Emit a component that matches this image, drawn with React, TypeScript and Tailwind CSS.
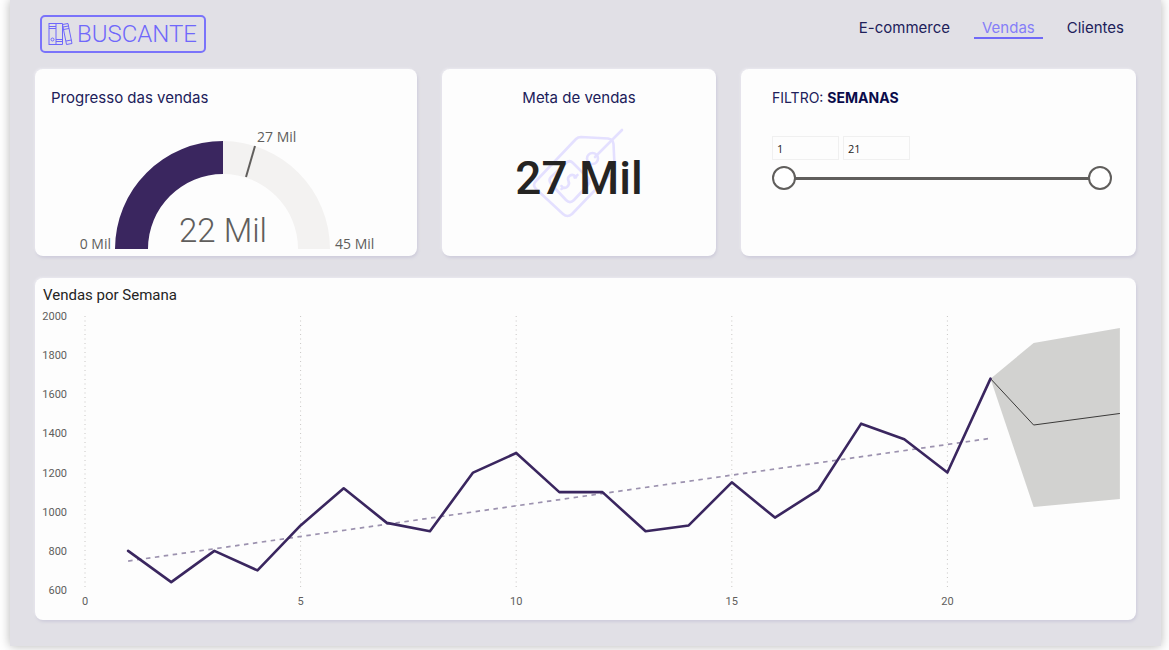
import React, { useState } from 'react';

const NAV_ITEMS = ['E-commerce', 'Vendas', 'Clientes'];

const SALES = [
  800, 640, 800, 700, 930, 1120, 943, 900, 1200, 1300, 1100,
  1100, 900, 930, 1150, 970, 1110, 1450, 1370, 1200, 1680,
];

const FORECAST = [
  { week: 21, value: 1680, low: 1680, high: 1680 },
  { week: 22, value: 1443, low: 1024, high: 1862 },
  { week: 24, value: 1502, low: 1065, high: 1939 },
];

const TREND = { from: { week: 1, value: 748 }, to: { week: 21, value: 1375 } };

const Y_TICKS = [2000, 1800, 1600, 1400, 1200, 1000, 800, 600];
const X_TICKS = [0, 5, 10, 15, 20];

const xAt = (week: number) => 50 + week * 43.12;
const yAt = (value: number) => 283 - (value - 600) * 0.1957;
const toPoints = (list: { week: number; value: number }[]) =>
  list.map((p) => `${xAt(p.week)},${yAt(p.value)}`).join(' ');

const Card: React.FC<{ className?: string; children: React.ReactNode }> = ({ className = '', children }) => (
  <section className={`rounded-lg bg-[#fdfdfd] shadow-[1px_2px_3px_#cfcddb,-1px_-1px_2px_#ebeaf0] ${className}`}>
    {children}
  </section>
);

const Logo = () => (
  <a
    href="#"
    className="flex h-[38px] w-[166px] items-center gap-1 rounded-[5px] border-2 border-[#7a73fa] pl-1.5 text-[#6f67fb]"
  >
    <svg
      width="25"
      height="24"
      viewBox="0 0 25 24"
      fill="none"
      stroke="currentColor"
      strokeWidth="1"
      className="shrink-0"
      aria-hidden="true"
    >
      <rect x="1" y="1.5" width="7" height="21" />
      <path d="M1 4.5h7M1 6.5h7M8 1.5h6.500v21H8M8 17.500h6.500M8 19.500h6.500" />
      <circle cx="4.500" cy="17.500" r="1.500" />
      <path d="M14.500 2.500l5.500-1 4 20-5.500 1zM15 5l5.500-1M15.500 7.500l5.500-1M18 19l5.500-1" />
    </svg>
    <span className="font-[Roboto,sans-serif] text-[24px] leading-8 font-light">BUSCANTE</span>
  </a>
);

const GaugeCard = () => (
  <Card>
    <h2 className="pt-[18px] pl-4 text-[15px] leading-[22px]">Progresso das vendas</h2>
    <svg viewBox="0 0 382 147" className="block w-full" role="img" aria-label="22 Mil de 45 Mil">
      <path d="M80 140A108 108 0 0 1 188 32V65A75 75 0 0 0 113 140Z" fill="#3a265f" />
      <path d="M188 32A108 108 0 0 1 295 140H263A75 75 0 0 0 188 65Z" fill="#f3f2f1" />
      <line x1="220" y1="37" x2="211" y2="68" stroke="#605e5c" strokeWidth="2" />
      <g className="font-['Open_Sans',sans-serif] text-[14px]" fill="#605e5c">
        <text x="222" y="33">27 Mil</text>
        <text x="76" y="140" textAnchor="end">0 Mil</text>
        <text x="300" y="140">45 Mil</text>
      </g>
      <text
        x="188"
        y="133"
        textAnchor="middle"
        fill="#605e5c"
        className="font-[Roboto,sans-serif] text-[33px] font-light"
      >
        22 Mil
      </text>
    </svg>
  </Card>
);

const GoalCard = () => (
  <Card className="text-center">
    <h2 className="pt-[18px] text-[15px] leading-[22px]">Meta de vendas</h2>
    <div className="mt-[18px] grid h-[102px] items-center justify-items-center">
      <svg
        width="94"
        height="92"
        viewBox="0 0 94 92"
        fill="none"
        stroke="#e4e0ff"
        strokeWidth="2.600"
        strokeLinecap="round"
        strokeLinejoin="round"
        className="col-start-1 row-start-1 self-start"
        aria-hidden="true"
      >
        <path d="M49 10L76 11.500Q81 12 81.500 17L82.500 38Q82.500 43 79 46.500L40 87Q35.500 91 31 87L4 62Q0 58 4 54L44 12Q46 10 49 10Z" />
        <path d="M90 3L63 30" />
        <circle cx="60.500" cy="31.500" r="5.500" />
        <path d="M41 36L56 51Q59 54.500 56 58L42 73Q38 77 34 73L19 57Q16 53 19 50L34 36Q37.500 32.500 41 36Z" />
        <path d="M29.500 59Q31.500 62.500 35 60Q38 57.500 36.500 54Q35 50.500 38 48.500Q41.500 46.500 44 50.500M29.500 62L32 60.500M42.500 50.500L45.500 48" />
      </svg>
      <p className="col-start-1 row-start-1 font-[Roboto,sans-serif] text-[46px] leading-none font-medium text-[#252423]">
        27 Mil
      </p>
    </div>
  </Card>
);

const RANGE_CLASS =
  'pointer-events-none col-start-1 row-start-1 m-0 h-6 w-full appearance-none bg-transparent [&::-webkit-slider-thumb]:pointer-events-auto [&::-webkit-slider-thumb]:size-6 [&::-webkit-slider-thumb]:cursor-pointer [&::-webkit-slider-thumb]:appearance-none [&::-webkit-slider-thumb]:rounded-full [&::-webkit-slider-thumb]:border-2 [&::-webkit-slider-thumb]:border-solid [&::-webkit-slider-thumb]:border-[#605e5c] [&::-webkit-slider-thumb]:bg-white';

const BOX_CLASS =
  "h-6 w-[67px] border border-[#f0f0f0] bg-transparent px-1 font-['Open_Sans',sans-serif] text-[11px] text-[#252423]";

const FilterCard = () => {
  const [from, setFrom] = useState(1);
  const [to, setTo] = useState(21);
  const changeFrom = (e: React.ChangeEvent<HTMLInputElement>) => setFrom(Math.min(Number(e.target.value), to));
  const changeTo = (e: React.ChangeEvent<HTMLInputElement>) => setTo(Math.max(Number(e.target.value), from));

  return (
    <Card className="pr-6 pl-[31px]">
      <h2 className="pt-[18px] text-[14px] leading-[22px]">
        FILTRO: <strong className="font-bold text-[#0a0b4a]">SEMANAS</strong>
      </h2>
      <div className="mt-[27px] flex gap-1">
        <input type="text" aria-label="Semana inicial" value={from} onChange={changeFrom} className={BOX_CLASS} />
        <input type="text" aria-label="Semana final" value={to} onChange={changeTo} className={BOX_CLASS} />
      </div>
      <div className="mt-1.5 grid items-center">
        <div className="col-start-1 row-start-1 mx-3 h-[3px] bg-[#605e5c]" />
        <input type="range" aria-label="Início do intervalo" min={1} max={21} value={from} onChange={changeFrom} className={RANGE_CLASS} />
        <input type="range" aria-label="Fim do intervalo" min={1} max={21} value={to} onChange={changeTo} className={RANGE_CLASS} />
      </div>
    </Card>
  );
};

const WeeklyChart = () => {
  const sales = SALES.map((value, i) => ({ week: i + 1, value }));
  const band = [
    ...FORECAST.map((f) => ({ week: f.week, value: f.high })),
    ...[...FORECAST].reverse().map((f) => ({ week: f.week, value: f.low })),
  ];

  return (
    <Card className="mt-[22px]">
      <h2 className="pt-[5px] pl-2 font-[Roboto,sans-serif] text-[15px] leading-6 text-[#252423]">Vendas por Semana</h2>
      <svg viewBox="0 0 1101 313" className="block w-full" role="img" aria-label="Vendas por Semana">
        {X_TICKS.map((week) => (
          <line key={week} x1={xAt(week)} x2={xAt(week)} y1="9" y2="283" stroke="#c8c6c4" strokeWidth="1" strokeDasharray="1 3.500" />
        ))}
        <g className="font-[Roboto,sans-serif] text-[11px]" fill="#605e5c">
          {Y_TICKS.map((value) => (
            <text key={value} x="32" y={yAt(value) + 4} textAnchor="end">{value}</text>
          ))}
          {X_TICKS.map((week) => (
            <text key={week} x={xAt(week)} y="298" textAnchor="middle">{week}</text>
          ))}
        </g>
        <polygon points={toPoints(band)} fill="#d2d2d0" />
        <polyline points={toPoints(FORECAST)} fill="none" stroke="#3b3a39" strokeWidth="1" />
        <polyline
          points={toPoints([TREND.from, TREND.to])}
          fill="none"
          stroke="#9c92af"
          strokeWidth="1.700"
          strokeDasharray="4.500 4.500"
        />
        <polyline points={toPoints(sales)} fill="none" stroke="#3a265f" strokeWidth="2.600" strokeLinejoin="round" strokeLinecap="round" />
      </svg>
    </Card>
  );
};

const App: React.FC = () => {
  const [active, setActive] = useState('Vendas');

  return (
    <div className="overflow-hidden bg-white pr-2 pb-1 pl-2.5 font-[Inter,sans-serif] text-[#20205a]">
      <main className="bg-[#e1e0e6] px-[25px] pb-[26px] shadow-[0_0_10px_#b5b5b5]">
        <header className="flex h-[69px] items-start justify-between pr-3 pl-[5px]">
          <div className="pt-[15px]">
            <Logo />
          </div>
          <nav className="flex gap-6 pt-[18px] text-[15px] leading-[19px]">
            {NAV_ITEMS.map((item) => (
              <a
                key={item}
                href="#"
                onClick={() => setActive(item)}
                className={item === active ? 'border-b-2 border-[#7069f7] px-2 text-[#857ef8]' : ''}
              >
                {item}
              </a>
            ))}
          </nav>
        </header>

        <div className="grid grid-cols-[382fr_274fr_395fr] gap-[25px]">
          <GaugeCard />
          <GoalCard />
          <FilterCard />
        </div>

        <WeeklyChart />
      </main>
    </div>
  );
};

export default App;
